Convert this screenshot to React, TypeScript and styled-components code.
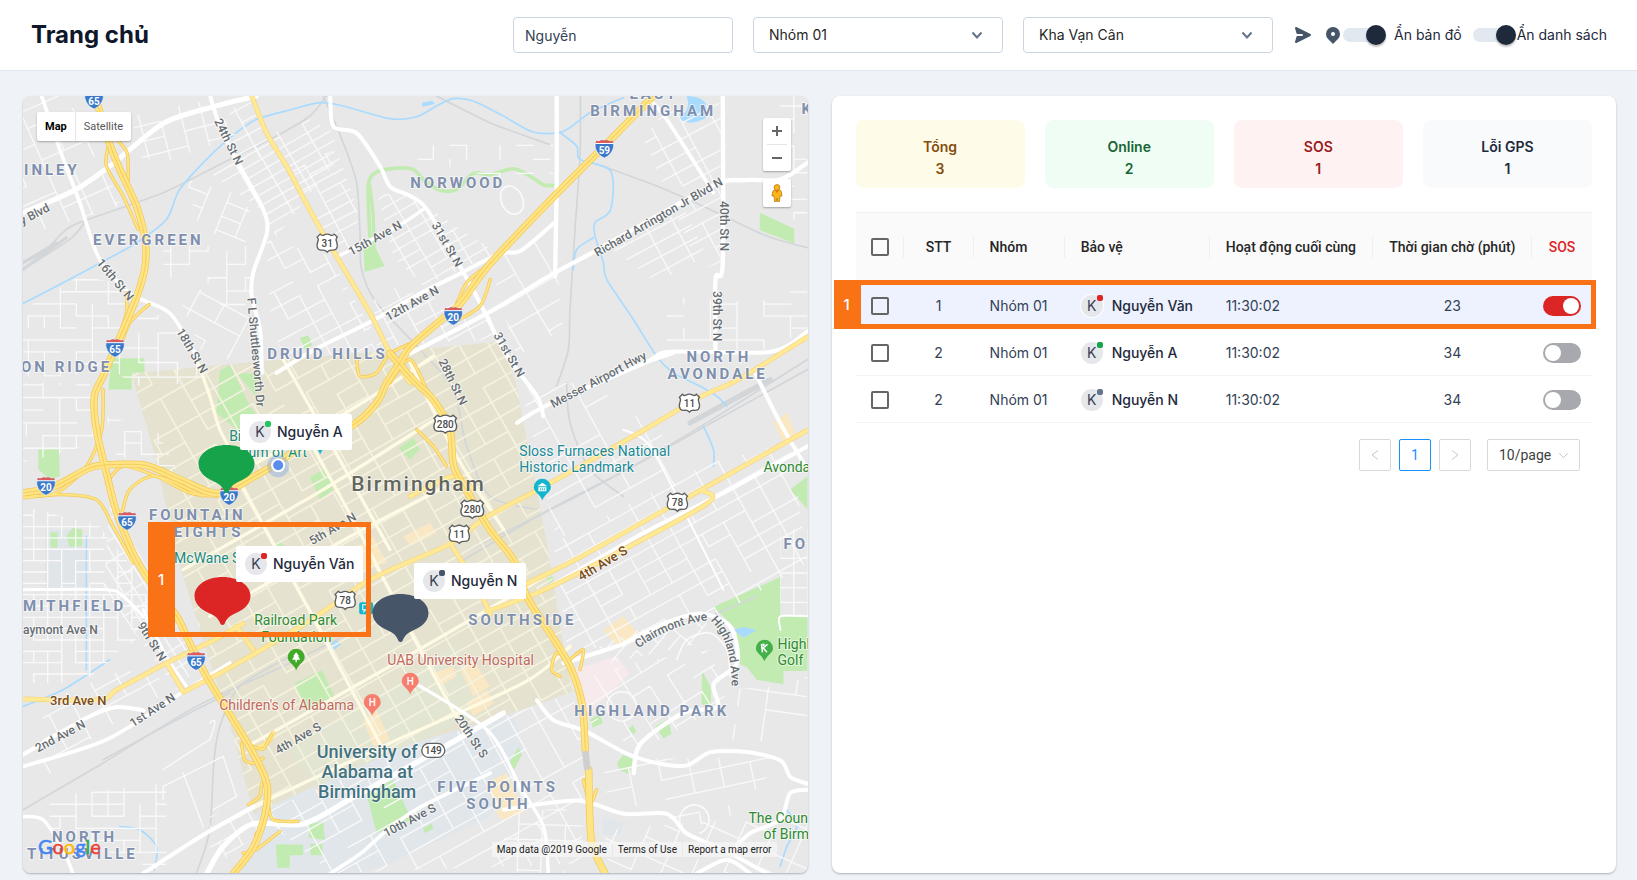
import React, { useState } from "react";
import styled, { createGlobalStyle, css } from "styled-components";

const GlobalStyle = createGlobalStyle`
  *, *::before, *::after { box-sizing: border-box; }
  body { margin: 0; background: #eff3f8; }
  button, input, select { font: inherit; }
`;

const inter = `Inter, "Noto Sans", sans-serif`;
const roboto = `Roboto, "Noto Sans", sans-serif`;

/* ---------- page ---------- */

const Page = styled.div`
  min-height: 100vh;
  display: flex;
  flex-direction: column;
  background: #eff3f8;
  color: #1e293b;
  font-family: ${inter};
  font-size: 14px;
  line-height: 22px;
`;

const Header = styled.header`
  display: flex;
  align-items: center;
  justify-content: space-between;
  padding: 17px 30px 17px 31px;
  background: #fff;
  border-bottom: 1px solid #e2e8f0;
`;

const Title = styled.h1`
  margin: 0;
  font-size: 24px;
  line-height: 34px;
  font-weight: 700;
  color: #0f172a;
`;

const Toolbar = styled.div`
  display: flex;
  align-items: center;
  gap: 20px;
`;

const fieldBox = css`
  height: 36px;
  border: 1px solid #cbd5e1;
  border-radius: 4px;
  background: #fff;
  font-size: 14px;
`;

const SearchInput = styled.input`
  ${fieldBox}
  width: 220px;
  padding: 0 11px;
  color: #334155;
`;

const SelectWrap = styled.div`
  position: relative;
  width: 250px;
  svg {
    position: absolute;
    right: 20px;
    top: 12px;
    pointer-events: none;
  }
`;

const Select = styled.select`
  ${fieldBox}
  width: 100%;
  padding: 0 15px;
  color: #262626;
  appearance: none;
`;

const ViewOptions = styled.div`
  display: flex;
  align-items: center;
`;

const IconButton = styled.button`
  display: flex;
  padding: 0;
  margin-right: 10px;
  border: 0;
  background: none;
  color: #475569;
  &:last-of-type { margin-right: 0; }
`;

const ViewSwitch = styled.label<{ $gap: number }>`
  display: flex;
  align-items: center;
  gap: ${(p) => p.$gap}px;
  font-size: 14px;
  color: #1e293b;
  & + & { margin-left: 11px; }
`;

const ViewSwitchInput = styled.input`
  appearance: none;
  position: relative;
  width: 44px;
  height: 20px;
  margin: 0;
  &::before {
    content: "";
    position: absolute;
    inset: 3px 4px 3px 0;
    border-radius: 7px;
    background: #e2e8f0;
  }
  &::after {
    content: "";
    position: absolute;
    left: 1px;
    top: 0;
    width: 20px;
    height: 20px;
    border-radius: 50%;
    background: #1e293b;
    box-shadow: 0 2px 2px rgba(0, 0, 0, 0.25);
  }
  &:checked::after { left: 23px; }
`;

const Main = styled.main`
  flex: 1;
  display: grid;
  grid-template-columns: minmax(0, 1fr) minmax(0, 1fr);
  gap: 24px;
  padding: 25px 21px 7px 23px;
`;

const Panel = styled.section`
  position: relative;
  border-radius: 8px;
  background: #fff;
  box-shadow: 0 1px 2px rgba(15, 23, 42, 0.3);
`;

/* ---------- map ---------- */

const MapPanel = styled(Panel)`
  overflow: hidden;
  background: #e8e8e8;
`;

const MapCanvas = styled.svg`
  position: absolute;
  inset: 0;
  width: 100%;
  height: 100%;
`;

const MapTypes = styled.div`
  position: absolute;
  left: 14px;
  top: 16px;
  display: flex;
  height: 29px;
  border-radius: 2px;
  background: #fff;
  box-shadow: 0 1px 2px rgba(0, 0, 0, 0.3);
`;

const MapTypeButton = styled.button<{ $active?: boolean }>`
  padding: 0 8px;
  border: 0;
  background: none;
  font-family: ${roboto};
  font-size: 11px;
  font-weight: ${(p) => (p.$active ? 700 : 400)};
  color: ${(p) => (p.$active ? "#000" : "#565656")};
  & + & { border-left: 1px solid #e6e6e6; }
`;

const MapTools = styled.div`
  position: absolute;
  right: 17px;
  top: 22px;
  display: flex;
  flex-direction: column;
  gap: 8px;
`;

const ToolCard = styled.div`
  width: 28px;
  padding: 0 4px;
  border-radius: 2px;
  background: #fff;
  box-shadow: 0 1px 2px rgba(0, 0, 0, 0.3);
`;

const ToolButton = styled.button<{ $tall?: boolean }>`
  display: flex;
  align-items: center;
  justify-content: center;
  width: 100%;
  height: ${(p) => (p.$tall ? 28 : 26)}px;
  padding: 0;
  border: 0;
  background: none;
  & + & { border-top: 1px solid #e6e6e6; height: 27px; }
`;

const Logo = styled.div`
  position: absolute;
  left: 15px;
  bottom: 15px;
  font-family: Lato, sans-serif;
  font-size: 20px;
  line-height: 24px;
  -webkit-text-stroke: 0.5px;
`;

const Letter = styled.span<{ $c: string }>`
  color: ${(p) => p.$c};
`;

const Attribution = styled.div`
  position: absolute;
  right: 31px;
  bottom: 16px;
  display: flex;
  gap: 1px;
  font-family: ${roboto};
  font-size: 10px;
  line-height: 15px;
  color: #222;
`;

const AttributionItem = styled.span`
  padding: 0 5px;
  background: rgba(245, 245, 245, 0.75);
  a { color: inherit; text-decoration: none; }
`;

const At = styled.div<{ $x: number; $y: number }>`
  position: absolute;
  left: ${(p) => p.$x}px;
  top: ${(p) => p.$y}px;
  display: flex;
`;

const Chip = styled.div`
  display: flex;
  align-items: center;
  gap: 6px;
  height: 36px;
  padding: 0 9px;
  border-radius: 2px;
  background: #fff;
  font-weight: 500;
  white-space: nowrap;
`;

const Highlight = styled.div<{ $l: number; $t: number; $w?: number; $r?: number; $h: number }>`
  position: absolute;
  left: ${(p) => p.$l}px;
  top: ${(p) => p.$t}px;
  ${(p) => (p.$w !== undefined ? `width: ${p.$w}px;` : "")}
  ${(p) => (p.$r !== undefined ? `right: ${p.$r}px;` : "")}
  height: ${(p) => p.$h}px;
  display: flex;
  align-items: center;
  padding-left: 10px;
  border: 5px solid #f97316;
  border-left: 0;
  color: #fff;
  font-size: 15px;
  font-weight: 500;
  box-shadow: inset 27px 0 0 #f97316;
  pointer-events: none;
`;

/* ---------- guards ---------- */

const AvatarBox = styled.span`
  position: relative;
  display: inline-flex;
  align-items: center;
  justify-content: center;
  width: 22px;
  height: 22px;
  border-radius: 50%;
  background: #e5e7eb;
  box-shadow: 0 0 0 1px #fff;
  font-size: 14px;
  font-weight: 400;
  color: #374151;
`;

const Dot = styled.i<{ $c: string }>`
  position: absolute;
  right: 0;
  top: 0;
  width: 6px;
  height: 6px;
  border-radius: 2px;
  background: ${(p) => p.$c};
`;

const Avatar = ({ color }: { color: string }) => (
  <AvatarBox>
    K<Dot $c={color} />
  </AvatarBox>
);

/* ---------- list ---------- */

const ListPanel = styled(Panel)`
  padding: 24px;
`;

const Cards = styled.div`
  display: grid;
  grid-template-columns: repeat(4, 1fr);
  gap: 20px;
  margin-bottom: 24px;
`;

const Card = styled.div<{ $bg: string; $fg: string }>`
  padding: 16px 8px 8px;
  border-radius: 8px;
  background: ${(p) => p.$bg};
  color: ${(p) => p.$fg};
  text-align: center;
  font-weight: 600;
`;

const CardLine = styled.div`
  line-height: 22px;
`;

const TableArea = styled.div`
  position: relative;
`;

const Table = styled.table`
  width: 100%;
  table-layout: fixed;
  border-collapse: separate;
  border-spacing: 0;
`;

const Th = styled.th<{ $center?: boolean; $red?: boolean }>`
  position: relative;
  height: 70px;
  padding: 0 ${(p) => (p.$center ? 0 : 16)}px 2px;
  border-top: 1px solid #f0f0f0;
  background: #fafafa;
  text-align: ${(p) => (p.$center ? "center" : "left")};
  font-family: ${roboto};
  font-weight: 500;
  white-space: nowrap;
  color: ${(p) => (p.$red ? "#dc2626" : "#262626")};
  &:not(:last-child)::after {
    content: "";
    position: absolute;
    right: 0;
    top: 23px;
    width: 1px;
    height: 22px;
    background: #efefef;
  }
`;

const Row = styled.tr<{ $active: boolean }>`
  background: ${(p) => (p.$active ? "#eef2ff" : "#fff")};
`;

const Td = styled.td<{ $center?: boolean }>`
  height: 47px;
  padding: 1px ${(p) => (p.$center ? 0 : 16)}px 0;
  border-bottom: 1px solid #f3f4f6;
  text-align: ${(p) => (p.$center ? "center" : "left")};
  white-space: nowrap;
  color: #334155;
`;

const Person = styled.div`
  display: flex;
  align-items: center;
  gap: 9px;
  font-weight: 500;
  color: #1e293b;
`;

const Check = styled.input`
  appearance: none;
  display: block;
  width: 18px;
  height: 18px;
  margin: 0 auto;
  border: 2px solid #666;
  border-radius: 2px;
  &:checked { background: #666; }
`;

const Toggle = styled.input`
  appearance: none;
  position: relative;
  display: block;
  width: 38px;
  height: 20px;
  margin: 0 auto;
  border-radius: 10px;
  background: #a7a9ae;
  &::after {
    content: "";
    position: absolute;
    left: 2px;
    top: 2px;
    width: 16px;
    height: 16px;
    border-radius: 50%;
    background: #fff;
  }
  &:checked { background: #dc2626; }
  &:checked::after { left: 20px; }
`;

const Pagination = styled.nav`
  display: flex;
  justify-content: flex-end;
  gap: 8px;
  padding: 16px 12px 0;
  font-family: ${roboto};
`;

const PageButton = styled.button<{ $current?: boolean }>`
  display: flex;
  align-items: center;
  justify-content: center;
  width: 32px;
  height: 32px;
  padding: 0;
  border: 1px solid ${(p) => (p.$current ? "#1890ff" : "#d9d9d9")};
  border-radius: 2px;
  background: #fff;
  color: ${(p) => (p.$current ? "#1890ff" : "#c8c8c8")};
`;

const PageSize = styled.div`
  position: relative;
  width: 93px;
  margin-left: 8px;
  select {
    width: 100%;
    height: 32px;
    padding: 0 11px;
    border: 1px solid #d9d9d9;
    border-radius: 2px;
    background: #fff;
    color: #404040;
    appearance: none;
  }
  svg {
    position: absolute;
    right: 11px;
    top: 11px;
    pointer-events: none;
  }
`;

/* ---------- map drawing ---------- */

/** Smooth path through a list of "x,y" points. */
function curve(points: string): string {
  const p = points.trim().split(/\s+/).map((s) => s.split(",").map(Number));
  let d = `M${p[0][0]} ${p[0][1]}`;
  for (let i = 0; i < p.length - 1; i++) {
    const a = p[i - 1] || p[i];
    const b = p[i];
    const c = p[i + 1];
    const e = p[i + 2] || c;
    d += `C${b[0] + (c[0] - a[0]) / 7} ${b[1] + (c[1] - a[1]) / 7} ${c[0] - (e[0] - b[0]) / 7} ${c[1] - (e[1] - b[1]) / 7} ${c[0]} ${c[1]}`;
  }
  return d;
}

interface GridProps {
  id: string;
  poly: string;
  angle: number;
  a: number;
  b: number;
  color?: string;
  width?: number;
  keep?: number;
}

/** Street grid clipped to a neighbourhood; some blocks are merged. */
function StreetGrid({ id, poly, angle, a, b, color = "#f9f9f9", width = 4, keep = 0.84 }: GridProps) {
  const pts = poly.split(" ").map((s) => s.split(",").map(Number));
  const xs = pts.map((p) => p[0]);
  const ys = pts.map((p) => p[1]);
  const cx = (Math.min(...xs) + Math.max(...xs)) / 2;
  const cy = (Math.min(...ys) + Math.max(...ys)) / 2;
  const r = Math.hypot(Math.max(...xs) - cx, Math.max(...ys) - cy);
  const na = Math.ceil(r / a);
  const nb = Math.ceil(r / b);
  let seed = Math.round(cx * 7 + cy * 13);
  const rnd = () => {
    seed = (seed * 1103515245 + 12345) % 2147483648;
    return seed / 2147483648;
  };
  let d = "";
  for (let i = -na; i <= na; i++)
    for (let j = -nb; j <= nb; j++) {
      if (rnd() < keep) d += `M${j * b} ${i * a}h${b}`;
      if (rnd() < keep) d += `M${j * b} ${i * a}v${a}`;
    }
  return (
    <g>
      <clipPath id={id}>
        <polygon points={poly} />
      </clipPath>
      <g clipPath={`url(#${id})`}>
        <path d={d} transform={`translate(${cx} ${cy}) rotate(${angle})`} stroke={color} strokeWidth={width} fill="none" />
      </g>
    </g>
  );
}

const urban =
  "326,832 731,794 1001,772 1211,757 1426,737 1476,852 1573,1352 1621,1652 1646,1787 1440,1860 1161,1942 691,2152 631,1922 531,1602 471,1412 391,1062 336,872";

const grids: GridProps[] = [
  { id: "g1", poly: "0,0 180,0 290,330 0,420", angle: -24, a: 52, b: 74, keep: 0.7 },
  { id: "g2", poly: "330,60 560,10 640,120 420,200 340,180", angle: -14, a: 46, b: 62 },
  { id: "g3", poly: "640,20 690,10 760,160 640,220 590,100", angle: -28, a: 40, b: 64 },
  { id: "g4", poly: "560,230 840,60 935,110 935,200 760,420 700,330", angle: -30, a: 30, b: 78, keep: 0.92 },
  { id: "g5", poly: "800,210 940,160 1000,330 1010,480 930,470", angle: -28, a: 32, b: 70 },
  { id: "g6", poly: "490,250 660,300 700,400 640,470 520,370", angle: 22, a: 44, b: 62, keep: 0.7 },
  { id: "g7", poly: "420,450 680,450 690,640 600,640 560,560 420,560", angle: 0, a: 40, b: 56, keep: 0.65 },
  { id: "g8", poly: "0,640 170,540 280,560 320,660 230,830 0,850", angle: 0, a: 36, b: 48, keep: 0.66 },
  { id: "g9", poly: "250,800 360,640 440,670 560,860 330,870", angle: 0, a: 44, b: 58, keep: 0.6 },
  { id: "g10", poly: "450,560 690,620 700,800 540,780", angle: 28, a: 60, b: 84, keep: 0.7 },
  { id: "g11", poly: "730,430 920,480 1080,760 780,790 740,640", angle: -28, a: 46, b: 62, keep: 0.7 },
  { id: "g12", poly: "1060,290 1160,300 1420,470 1200,570 1110,480", angle: -30, a: 32, b: 56, keep: 0.86 },
  { id: "g13", poly: "1170,140 1590,110 1590,270 1440,250 1180,190", angle: 0, a: 42, b: 50, keep: 0.4 },
  { id: "g14", poly: "1050,560 1400,650 1420,730 1060,750", angle: -28, a: 44, b: 70, keep: 0.8 },
  { id: "g15", poly: "1400,500 1590,400 1620,700 1480,780", angle: -30, a: 66, b: 96, keep: 0.9 },
  { id: "g16", poly: "1860,130 1920,50 2095,20 2095,500 2030,520", angle: -28, a: 42, b: 88, keep: 0.85 },
  { id: "g17", poly: "1740,440 1980,330 2050,480 1900,560", angle: -28, a: 40, b: 80, keep: 0.9 },
  { id: "g18", poly: "2270,0 2352,0 2352,380 2270,360", angle: 0, a: 40, b: 66, keep: 0.7 },
  { id: "g19", poly: "1930,600 2200,620 2352,560 2352,700 2230,760 1930,760", angle: 0, a: 36, b: 80, keep: 0.65 },
  { id: "g20", poly: "1490,860 1700,860 2060,1120 1600,1330", angle: -29, a: 92, b: 120, keep: 0.75 },
  { id: "g21", poly: "1590,1340 2060,1100 2300,1040 2352,1400 2100,1550 1700,1660 1630,1640", angle: -29, a: 42, b: 74, keep: 0.82 },
  { id: "g22", poly: "2270,1300 2352,1300 2352,1560 2270,1560", angle: 0, a: 44, b: 42 },
  { id: "g23", poly: "0,860 200,860 220,1040 0,1100", angle: 0, a: 38, b: 50, keep: 0.66 },
  { id: "g24", poly: "250,960 400,1000 460,1120 280,1080", angle: 0, a: 34, b: 50, keep: 0.6 },
  { id: "g25", poly: "0,1230 230,1290 380,1480 400,1580 180,1760 0,1760", angle: 0, a: 34, b: 42, keep: 0.8 },
  { id: "g26", poly: "260,1230 300,1290 540,1700 460,1780 240,1480", angle: 58, a: 34, b: 54, keep: 0.9 },
  { id: "g27", poly: "60,1820 300,1720 480,1760 240,1900 60,2050", angle: -28, a: 58, b: 78, keep: 0.85 },
  { id: "g28", poly: "80,2100 430,2060 430,2331 80,2200", angle: 0, a: 36, b: 48, keep: 0.7 },
  { id: "g29", poly: "560,2160 720,2100 720,2200 560,2320", angle: -28, a: 40, b: 60 },
  { id: "g30", poly: "740,2140 1200,1940 1440,1860 1650,1790 1690,2000 1670,2300 930,2331 760,2200", angle: -29, a: 52, b: 76, keep: 0.8 },
  { id: "g31", poly: "1700,1740 1830,1700 2060,1660 2110,1820 1850,1960 1700,1880", angle: -32, a: 48, b: 62, keep: 0.65 },
  { id: "g32", poly: "1740,1990 2290,1980 2100,2180 1760,2200", angle: -12, a: 58, b: 90, keep: 0.5 },
  { id: "g33", poly: "1740,2200 2352,2150 2352,2331 1760,2331", angle: 24, a: 54, b: 86, keep: 0.55 },
  { id: "g34", poly: "2100,1780 2270,1770 2352,1740 2352,1940 2120,1930", angle: 8, a: 56, b: 84, keep: 0.6 },
  { id: "g35", poly: "1450,2150 1680,2130 1680,2331 1430,2331", angle: 2, a: 46, b: 70, keep: 0.7 },
  { id: "g36", poly: "2030,1640 1760,1700 1700,1660 1900,1580 2110,1580", angle: -50, a: 36, b: 60, keep: 0.6 },
];

const rails = [
  "0,500 60,470 130,400 190,372 420,290 600,200 760,120 860,60 910,0",
  "900,0 960,140 1000,260 1010,400 1015,520 1060,620 1190,760 1290,880 1330,1050 1400,1200 1540,1240",
  "1671,0 1670,180 1655,400 1640,640 1635,760 1600,870",
  "1240,0 1400,80 1580,146",
  "1732,208 1900,270 2060,340 2230,420 2352,455",
  "1240,1440 1560,1250 1830,1110 2100,960 2352,820",
  "1300,1380 1700,1180 2000,1010 2352,790",
  "0,2140 240,2000 520,1830 780,1710 980,1610",
  "240,1990 480,1860 620,1790",
  "520,2331 560,2200 572,2000 590,1890 650,1770 800,1680",
  "1630,860 1640,980 1700,1120 1800,1200",
  "0,520 140,430 190,372",
  "2060,1560 2200,1500",
];

const waters = [
  "0,622 120,560 270,480 340,440 430,370 470,280 560,180 640,110 700,70 800,42 890,20 960,30 1100,68 1180,62 1240,30 1290,8 1350,15 1440,60 1530,108 1620,106 1700,50 1800,5",
  "1610,110 1660,150 1670,190 1762,225 1762,340 1715,380 1715,420 1740,500 1750,550 1830,670 1900,780 1950,830 2030,870 2080,900 2110,930",
  "1710,425 1660,460 1650,520",
  "2040,990 2070,1060 2070,1110",
  "260,1690 120,1780 0,1830",
  "190,1320 190,1500 190,1720",
  "290,2190 350,2200 400,2250 395,2320",
  "2290,2140 2320,2190 2290,2250 2270,2310",
];

const arterials: [string, number][] = [
  ["0,350 156,282 271,202 421,82 571,32 700,0", 15],
  ["56,0 111,162 171,322 226,482 321,592 441,652 521,782", 11],
  ["561,0 591,92 651,212 721,342 731,412 690,530 686,602 711,700 716,830", 12],
  ["921,0 931,92 1001,112 1071,212 1101,272 1161,300 1211,340 1311,512 1371,622 1451,780 1541,900 1560,960", 12],
  ["941,482 1121,392 1200,340", 10],
  ["760,830 871,762 1051,672 1191,592 1311,532 1431,472 1491,465 1591,382", 12],
  ["1600,0 1600,260 1595,540", 13],
  ["1161,772 1391,652 1591,532 1721,462 2061,272 2161,252 2271,250 2352,200", 13],
  ["2098,0 2098,500 2076,550 2076,775", 13],
  ["1870,0 1930,70 2070,290", 11],
  ["1481,980 1571,927 1861,802 1941,767 2241,767 2352,705", 12],
  ["1861,800 1950,770", 12],
  ["0,1975 190,1865 281,1832 361,1842", 12],
  ["0,2010 250,1930 471,1792 620,1700", 11],
  ["360,2331 541,2215 691,2130", 12],
  ["551,2331 600,2250 690,2182 841,2182 991,2102 1191,1992 1440,1850", 16],
  ["921,2331 1011,2272 1091,2202 1191,2132 1401,2030", 11],
  ["1541,1812 1591,1872 1681,1902 1811,1972 1911,2002 1991,2007 2061,1967 2171,1967 2271,1992 2301,2042 2352,2062", 12],
  ["1441,2140 1661,2112 1801,2152 1931,2152 1991,2212 2100,2260 2230,2331", 12],
  ["1621,1700 1801,1642 1921,1582 2031,1552 2121,1592 2141,1700 2071,1762 2081,1832 1980,1850 1851,1942 1831,2030", 13],
  ["1161,1752 1391,1900 1491,2072 1561,2192 1575,2331", 10],
  ["2120,2270 2180,2210 2270,2170 2300,2090 2352,2080", 12],
  ["0,1480 250,1480 300,1500 360,1560", 9],
  ["1391,1540 1561,1480 1860,1310 2100,1190 2352,1050", 12],
  ["2190,820 2270,980 2352,1120", 12],
  ["360,1540 430,1680 490,1770", 9],
  ["0,2160 60,2170 120,2260 150,2331", 10],
  ["2020,2331 2110,2290 2180,2331", 12],
  ["1800,1000 1880,1050 2000,1280 2100,1480", 6],
  ["2271,1600 2271,1560 2352,1560", 6],
];

const cream: string[] = [
  "520,790 560,900 590,1000 640,1090",
  "480,1420 900,1180 1250,960",
  "620,1100 760,1360 900,1620 1080,1960",
  "840,1000 1000,1290 1180,1640 1320,1900",
  "700,1100 1000,930 1230,780",
  "560,1560 1000,1310 1250,1180",
  "690,1940 1100,1710 1600,1420",
  "691,2130 1100,1940 1500,1760 1640,1650",
  "1161,800 1300,1080 1441,1300",
  "780,790 1000,1180 1100,1360",
];

const lightYellow: string[] = [
  "686,0 731,112 791,212 871,362 941,482 1041,652 1101,772 1161,860",
  "0,1808 230,1810 281,1780 431,1700 571,1632 660,1582",
  "481,1787 600,1725 741,1645 880,1560 1031,1455 1161,1395 1281,1342 1391,1262 1541,1182 1721,1082 1861,1002 2031,902 2141,852 2352,722",
  "1511,1462 1671,1382 1931,1237 2031,1182 2352,1002",
  "1391,1545 1541,1490 1700,1412 2051,1222 2031,1182",
  "1281,1342 1350,1450 1401,1552",
  "430,1700 481,1787",
  "640,1590 690,1660",
  "1161,1200 1290,1140 1350,1180",
  "690,1958 731,1940 750,1910",
];

const highways: string[] = [
  "216,0 256,132 291,222 341,332 366,432 366,512 341,602 291,722 240,840 214,900 220,1000 250,1130 275,1230 300,1300 340,1390 390,1470 461,1560 500,1640 551,1742 631,1872 691,1972 731,2062 726,2152 691,2252 631,2331",
  "0,1190 91,1172 200,1115 271,1105 371,1108 471,1150 560,1188 611,1187 691,1142 761,1102 851,1042 991,985 1060,920 1090,860 1130,800 1161,752 1241,682 1311,622 1401,502 1601,292 1741,152 1890,0",
  "1101,772 1171,852 1231,912 1280,1000 1292,1112 1341,1202 1401,1302 1471,1392 1511,1502 1581,1612 1641,1712 1676,1822 1686,1962",
  "1696,2020 1704,2232 1745,2331",
];

const ramps: string[] = [
  "240,880 236,1000 190,1110 100,1190 0,1200",
  "250,1160 300,1110 400,1140 500,1190 580,1200",
  "540,1200 400,1140 320,1180 295,1260",
  "0,1205 110,1195 220,1210 270,1290 330,1400",
  "256,150 250,210 300,300 345,400",
  "271,120 312,170 315,260",
  "378,625 320,680 290,760",
  "310,590 310,650 285,730",
  "1001,790 1010,840 1060,830 1101,772 1190,730",
  "1101,860 1160,790 1210,880",
  "1180,1000 1230,1050 1270,1110",
  "1401,502 1330,560 1290,650",
  "1401,550 1370,630 1290,680",
  "655,1940 665,1990 695,2000 720,1985",
  "690,1950 720,1958 745,1915",
  "715,2060 710,2100 675,2125",
  "735,2120 750,2170 825,2175",
  "700,2210 690,2260 660,2270",
  "770,2205 700,2260",
  "1640,1700 1600,1670 1585,1720 1610,1740",
  "1640,1690 1680,1660 1670,1720",
  "1680,2050 1700,2120 1720,2080",
];

const parks = [
  "265,786 364,786 364,830 326,830 326,880 256,880",
  "590,824 620,806 680,930 730,990 640,1000 580,950",
  "641,832 700,832 700,900",
  "830,724 856,718 868,748 844,760",
  "1021,454 1052,444 1084,510 1024,528",
  "2209,350 2312,398 2312,442 2209,402",
  "2070,1532 2270,1442 2270,1560 2352,1560 2352,1724 2280,1724 2280,1764 2200,1750 2170,1712 2140,1700 2140,1600",
  "2300,1180 2352,1140 2352,1240",
  "860,1142 910,1114 930,1180 890,1210",
  "1126,1055 1171,1024 1190,1060 1161,1090",
  "750,1345 770,1336 785,1350 752,1370",
  "46,1060 108,1060 110,1140 80,1150 46,1120",
  "82,1308 104,1308 104,1354 82,1354",
  "130,1320 150,1294 178,1300 176,1350 140,1352",
  "815,1760 896,1722 934,1800 850,1850",
  "1030,2092 1110,2050 1165,2170 1060,2210",
  "758,2244 840,2244 840,2276 800,2276 800,2314 762,2314",
  "860,2182 900,2176 905,2230 856,2224",
  "862,2242 898,2242 898,2276 862,2276",
  "1455,2004 1486,1952 1496,1974 1472,2020",
  "2036,1724 2062,1770 2064,1850 2034,1820",
  "1896,1890 1934,1866 1944,1912 1920,1926",
  "1780,2000 1800,1976 1830,1990 1816,2032 1790,2022",
  "1814,1900 1828,1886 1838,1904 1832,1914",
  "1700,1870 1730,1850 1738,1880 1708,1894",
  "1570,1448 1588,1440 1594,1452 1574,1462",
  "1200,2196 1226,2180 1230,2196 1204,2210",
];

const blocks: [string, string][] = [
  ["691,2152 1161,1942 1470,1850 1500,1960 1400,2160 1100,2300 1000,2331 620,2331 720,2200", "#e1e6eb"],
  ["66,1300 176,1300 186,1350 186,1480 66,1480", "#e0e5ea"],
  ["1650,1720 1780,1680 1818,1730 1740,1810 1690,1850 1670,1800", "#f7eaec"],
  ["1740,2160 1800,2180 1790,2216 1740,2216", "#e1e6eb"],
];

const warm = [
  "1020,1870 1060,1842 1100,1930 1050,1950",
  "1310,1720 1350,1690 1400,1770 1350,1800",
  "1330,1820 1390,1780 1410,1820 1350,1860",
  "1230,1730 1290,1710 1300,1740 1250,1770",
  "1000,1350 1050,1320 1090,1400 1010,1420",
  "1140,1320 1220,1280 1240,1310 1161,1350",
  "1390,2060 1450,2030 1500,2150 1430,2170",
  "1740,1600 1800,1560 1850,1620 1780,1650",
  "2250,980 2290,950 2320,1020 2280,1040",
];

const areaLabels: [number, number, string][] = [
  [1, 79, "INLEY"],
  [70, 149, "EVERGREEN"],
  [-2, 276, "ON RIDGE"],
  [244, 263, "DRUID HILLS"],
  [387, 92, "NORWOOD"],
  [606, 3, "EAST"],
  [567, 20, "BIRMINGHAM"],
  [778, 18, "K"],
  [663, 266, "NORTH"],
  [644, 283, "AVONDALE"],
  [126, 424, "FOUNTAIN"],
  [137, 441, "HEIGHTS"],
  [0, 515, "MITHFIELD"],
  [445, 529, "SOUTHSIDE"],
  [760, 453, "FO"],
  [551, 620, "HIGHLAND PARK"],
  [414, 696, "FIVE POINTS"],
  [443, 713, "SOUTH"],
  [29, 746, "NORTH"],
  [4, 763, "TITUSVILLE"],
];

const streetLabels: [number, number, number, string][] = [
  [191, 25, 64, "24th St N"],
  [408, 129, 60, "31st St N"],
  [470, 239, 60, "31st St N"],
  [415, 265, 64, "28th St N"],
  [73, 167, 50, "16th St N"],
  [153, 235, 60, "18th St N"],
  [224, 202, 85, "F L Shuttlesworth Dr"],
  [328, 160, -29, "15th Ave N"],
  [365, 225, -29, "12th Ave N"],
  [-1, 129, -27, "y Blvd"],
  [574, 161, -30, "Richard Arrington Jr Blvd N"],
  [697, 105, 90, "40th St N"],
  [690, 195, 90, "39th St N"],
  [530, 312, -28, "Messer Airport Hwy"],
  [289, 449, -30, "5th Ave N"],
  [0, 538, 0, "aymont Ave N"],
  [114, 529, 58, "9th St N"],
  [110, 631, -33, "1st Ave N"],
  [15, 656, -28, "2nd Ave N"],
  [255, 658, -30, "4th Ave S"],
  [431, 622, 56, "20th St S"],
  [363, 741, -28, "10th Ave S"],
];

const poiLabels: [number, number, string, string][] = [
  [496, 360, "Sloss Furnaces National", "#1a8a97"],
  [496, 376, "Historic Landmark", "#1a8a97"],
  [206, 345, "Birmingham", "#1a8a7d"],
  [151, 467, "McWane Science", "#1a8a7d"],
  [231, 529, "Railroad Park", "#2e8b2e"],
  [238, 546, "Foundation", "#2e8b2e"],
  [364, 569, "UAB University Hospital", "#c2695a"],
  [196, 614, "Children's of Alabama", "#c2695a"],
  [740, 376, "Avondale", "#2e8b2e"],
  [754, 553, "Highland", "#2e8b2e"],
  [754, 569, "Golf", "#2e8b2e"],
  [725, 727, "The Country", "#2e8b2e"],
  [740, 743, "of Birmingham", "#2e8b2e"],
];

const interstates: [number, number, string][] = [
  [71, 4, "65"], [92, 252, "65"], [581, 53, "59"], [430, 220, "20"],
  [23, 390, "20"], [104, 425, "65"], [206, 400, "20"], [173, 565, "65"],
];

const usRoutes: [number, number, string][] = [
  [304, 147, "31"], [422, 328, "280"], [449, 413, "280"], [436, 438, "11"],
  [666, 307, "11"], [654, 406, "78"], [322, 504, "78"],
];

const Halo = styled.g`
  font-family: ${roboto};
  paint-order: stroke;
  stroke: rgba(255, 255, 255, 0.6);
  stroke-width: 2px;
  stroke-linejoin: round;
`;

const PinShape = ({ x, y, fill, children }: { x: number; y: number; fill: string; children?: React.ReactNode }) => (
  <g transform={`translate(${x} ${y})`}>
    <path d="M0-8.500A8.500 8.500 0 0 1 8.500 0C8.500 5 2.500 6.500 0 13C-2.500 6.500-8.500 5-8.500 0A8.500 8.500 0 0 1 0-8.500Z" fill={fill} />
    {children}
  </g>
);

const CityMap = () => (
  <MapCanvas viewBox="0 0 784 777" preserveAspectRatio="xMinYMin slice" role="img" aria-label="Birmingham">
    <rect width="784" height="777" fill="#e8e8e8" />
    <g transform="scale(0.333333)" fill="none" strokeLinecap="round" strokeLinejoin="round">
      {blocks.map(([p, c]) => <polygon key={p} points={p} fill={c} />)}
      <polygon points={urban} fill="#e5e2d0" />
      <polygon points="800,1960 1300,1640 1380,1850 1161,1942 880,2070" fill="#e1e5d2" />
      {warm.map((p) => <polygon key={p} points={p} fill="#fae8c4" />)}
      {parks.map((p) => <polygon key={p} points={p} fill="#c2ebb2" />)}
      <path d={curve("1040,420 1035,270 1060,228 1120,216 1170,220 1200,250 1250,282 1300,280 1350,232 1400,236 1470,218 1520,240 1560,266 1590,268")} stroke="#c2ebb2" strokeWidth="11" />
      <path d={curve("1040,270 1050,360 1052,450")} stroke="#c2ebb2" strokeWidth="10" />
      <path d="M1990 0Q2040 0 2050 30Q2060 60 2040 70Q2000 90 1970 70Q1960 50 1985 50Q2000 30 1990 0Z" fill="#a9dbff" />
      <path d="M2130 1600l30-8 40 10-40 22z M1197 20l30-6 8 10-38 8z M910 1650l30-20 14 14-34 26z" fill="#a9dbff" />
      {rails.map((p) => <path key={p} d={curve(p)} stroke="#d3d6d9" strokeWidth="5" />)}
      <path d="M2000 980L2240 850" stroke="#d3d6d9" strokeWidth="16" />
      <path d="M0 520L130 425M0 500L100 440" stroke="#d3d6d9" strokeWidth="9" />
      {waters.map((p) => <path key={p} d={curve(p)} stroke="#a9dbff" strokeWidth="5" />)}
      {grids.map((g) => <StreetGrid key={g.id} {...g} />)}
      <StreetGrid id="urban" poly={urban} angle={-29.6} a={50} b={78} color="#f5f2df" width={5} keep={0.85} />
      <path d="M420 2110v-40L600 1980l40 120-70 40M480 2030l60 160M560 1880q30-30 0 50l-80 50-60 40" stroke="#fafafa" strokeWidth="4" />
      <circle cx="1795" cy="1830" r="44" stroke="#fafafa" strokeWidth="4" />
      <ellipse cx="1466" cy="312" rx="32" ry="44" transform="rotate(-25 1466 312)" stroke="#fafafa" strokeWidth="5" />
      <path d="M1970 2180a44 44 0 1 1 60 30" stroke="#fafafa" strokeWidth="5" />
      <path d={curve("1960,1690 1990,1630 2060,1610 2110,1660 2120,1740")} stroke="#fafafa" strokeWidth="5" />
      {cream.map((p) => <path key={p} d={curve(p)} stroke="#fffae3" strokeWidth="10" />)}
      {arterials.map(([p, w]) => <path key={p} d={curve(p)} stroke="#fff" strokeWidth={w} />)}
      {lightYellow.map((p) => <path key={p} d={curve(p)} stroke="#f5d483" strokeWidth="15" />)}
      {lightYellow.map((p) => <path key={p} d={curve(p)} stroke="#ffe994" strokeWidth="11" />)}
      {ramps.map((p) => <path key={p} d={curve(p)} stroke="#f2c654" strokeWidth="10" />)}
      {ramps.map((p) => <path key={p} d={curve(p)} stroke="#ffe483" strokeWidth="6" />)}
      {highways.map((p) => <path key={p} d={curve(p)} stroke="#f2c654" strokeWidth="22" />)}
      {highways.map((p) => <path key={p} d={curve(p)} stroke="#ffe483" strokeWidth="18" />)}
      {highways.slice(0, 3).map((p) => <path key={p} d={curve(p)} stroke="#f4cd5e" strokeWidth="3" />)}
      <path d="M1686 1964L1692 2020" stroke="#cfcfcf" strokeWidth="20" strokeLinecap="butt" />
    </g>

    <Halo fontSize="12" fill="#666d72" fontWeight="500">
      {streetLabels.map(([x, y, r, t], i) => (
        <text key={i} transform={`translate(${x} ${y}) rotate(${r})`}>{t}</text>
      ))}
      <path id="clairmont" d="M615 552Q646 529 684 524" fill="none" stroke="none" />
      <path id="highland" d="M687 524Q706 542 708 580L709 610" fill="none" stroke="none" />
      <text><textPath href="#clairmont">Clairmont Ave</textPath></text>
      <text><textPath href="#highland">Highland Ave</textPath></text>
    </Halo>
    <Halo fontSize="13" fill="#7a4b1b" fontWeight="500">
      <text transform="translate(558 485) rotate(-31)">4th Ave S</text>
      <text x="27" y="609">3rd Ave N</text>
    </Halo>
    <Halo fontSize="15" fill="#7f8fae" fontWeight="700" letterSpacing="3">
      {areaLabels.map(([x, y, t]) => <text key={`${t}${y}`} x={x} y={y}>{t}</text>)}
    </Halo>
    <Halo fontSize="14">
      {poiLabels.map(([x, y, t, c]) => <text key={t} x={x} y={y} fill={c}>{t}</text>)}
      <text x="284" y="361" textAnchor="end" fill="#1a8a7d">Museum of Art</text>
    </Halo>
    <Halo fontSize="18" fill="#437280" fontWeight="500" textAnchor="middle">
      <text x="344" y="662">University of</text>
      <text x="344" y="682">Alabama at</text>
      <text x="344" y="702">Birmingham</text>
    </Halo>
    <Halo fontSize="21" fill="#62665f" fontWeight="500" letterSpacing="2">
      <text x="328" y="395">Birmingham</text>
    </Halo>

    <g fontFamily={roboto} textAnchor="middle">
      {interstates.map(([x, y, t], i) => (
        <g key={i} transform={`translate(${x} ${y})`}>
          <path d="M-8-8.500Q-6-7-4-8.500Q-2-9.500 0-8.500Q2-9.500 4-8.500Q6-7 8-8.500Q10-4 9-1Q7 6 0 9Q-7 6-9-1Q-10-4-8-8.500Z" fill="#3a78c9" stroke="#fff" strokeWidth="0.6" />
          <path d="M-8-8.500Q-6-7-4-8.500Q-2-9.500 0-8.500Q2-9.500 4-8.500Q6-7 8-8.500L8.800-6H-8.800Z" fill="#dd5b5b" />
          <path d="M-9-5.500H9" stroke="#fff" />
          <text y="4.500" fontSize="10" fontWeight="700" fill="#fff">{t}</text>
        </g>
      ))}
      {usRoutes.map(([x, y, t], i) => (
        <g key={i} transform={`translate(${x} ${y}) scale(${t.length > 2 ? 1.12 : 1} 1)`}>
          <path d="M-7-9Q-5-7-3.500-8Q-1.500-9 0-9Q1.500-9 3.500-8Q5-7 7-9L10-6Q8-4 9.500-1Q11 3 9 6Q7 7.500 4 7Q1.500 7 0 9Q-1.500 7-4 7Q-7 7.500-9 6Q-11 3-9.500-1Q-8-4-10-6Z" fill="#fff" stroke="#5f6060" strokeWidth="1.300" />
        </g>
      ))}
      {usRoutes.map(([x, y, t], i) => (
        <text key={i} x={x} y={y + 4} fontSize="10" fontWeight="500" fill="#4a4a4a">{t}</text>
      ))}
      <rect x="398.500" y="647" width="23" height="14" rx="7" fill="#fff" stroke="#5f6060" strokeWidth="1.300" />
      <text x="410" y="658" fontSize="10" fontWeight="500" fill="#4a4a4a">149</text>

      <PinShape x={519} y={391} fill="#12b5cb">
        <path d="M-5-1L0-4.500 5-1ZM-4 0h8v4h-8Z" fill="#fff" />
        <path d="M-2 3V1M0 3V1M2 3V1" stroke="#12b5cb" />
      </PinShape>
      <PinShape x={273} y={561} fill="#43a929">
        <path d="M0-5L3-1H2L4 2.500H.7V5H-.7V2.500H-4L-2-1H-3Z" fill="#fff" />
      </PinShape>
      <PinShape x={387} y={585} fill="#f77e6e"><text y="3.500" fontSize="10" fontWeight="500" fill="#fff">H</text></PinShape>
      <PinShape x={349} y={606} fill="#f77e6e"><text y="3.500" fontSize="10" fontWeight="500" fill="#fff">H</text></PinShape>
      <PinShape x={741} y={552} fill="#43b049">
        <path d="M-3-4.500L-2 4M-2 0L3-4M-1 0L2.500 4" stroke="#fff" strokeWidth="1.500" fill="none" />
        <circle cx="-1" cy="-3.500" r="1.300" fill="#fff" />
      </PinShape>
    </g>
    <path d="M294 352h6l-3 6z" fill="#12b5cb" />
    <rect x="336" y="506" width="14" height="12" rx="2" fill="#12b5cb" />
    <path d="M339.500 508.500h5v5h-5zM340 516l1.500-2M344 516l-1.500-2" fill="none" stroke="#fff" />
    <circle cx="255" cy="370" r="11" fill="#5b8def" opacity="0.3" />
    <circle cx="255" cy="369" r="7" fill="#fff" />
    <circle cx="255" cy="369" r="5" fill="#5b8def" />
  </MapCanvas>
);

const GuardPin = ({ color }: { color: string }) => (
  <svg width="57" height="48" viewBox="0 0 57 48" aria-hidden="true">
    <path d="M28.500 0C44.500 0 56.500 8.500 56.500 19C56.500 29 47 34 39 37.500C34 40 32 43 30.500 47Q28.500 49 26.500 47C25 43 23 40 18 37.500C10 34 .5 29 .5 19C.5 8.500 12.500 0 28.500 0Z" fill={color} />
  </svg>
);

const Chevron = ({ size, color, width }: { size: number; color: string; width: number }) => (
  <svg width={size} height={size} viewBox="0 0 12 12" fill="none" stroke={color} strokeWidth={width} aria-hidden="true">
    <path d="M1.500 3.500L6 8.500L10.500 3.500" />
  </svg>
);

const markers = [
  { name: "Nguyễn A", color: "#16a34a", dot: "#22c55e", pin: [175, 349], chip: [217, 318] },
  { name: "Nguyễn Văn", color: "#dc2626", dot: "#dc2626", pin: [171, 481], chip: [213, 450] },
  { name: "Nguyễn N", color: "#475569", dot: "#475569", pin: [349, 498], chip: [391, 467] },
];

const stats = [
  { label: "Tổng", value: 3, bg: "#fefce8", fg: "#854d0e" },
  { label: "Online", value: 2, bg: "#f0fdf4", fg: "#166534" },
  { label: "SOS", value: 1, bg: "#fef2f2", fg: "#991b1b" },
  { label: "Lỗi GPS", value: 1, bg: "#f8fafc", fg: "#1e293b" },
];

const guards = [
  { stt: 1, group: "Nhóm 01", name: "Nguyễn Văn", dot: "#dc2626", last: "11:30:02", wait: 23, sos: true },
  { stt: 2, group: "Nhóm 01", name: "Nguyễn A", dot: "#16a34a", last: "11:30:02", wait: 34, sos: false },
  { stt: 2, group: "Nhóm 01", name: "Nguyễn N", dot: "#64748b", last: "11:30:02", wait: 34, sos: false },
];

const columnWidths = [48, 70, 91, 145, 163, 159, 60];

export default function App() {
  const [query, setQuery] = useState("Nguyễn");
  return (
    <Page>
      <GlobalStyle />
      <Header>
        <Title>Trang chủ</Title>
        <Toolbar>
          <SearchInput aria-label="Tên bảo vệ" value={query} onChange={(e) => setQuery(e.target.value)} />
          <SelectWrap>
            <Select aria-label="Nhóm"><option>Nhóm 01</option></Select>
            <Chevron size={12} color="#64748b" width={2} />
          </SelectWrap>
          <SelectWrap>
            <Select aria-label="Khu vực"><option>Kha Vạn Cân</option></Select>
            <Chevron size={12} color="#64748b" width={2} />
          </SelectWrap>
          <ViewOptions>
            <IconButton type="button" aria-label="Gửi">
              <svg width="20" height="20" viewBox="0 0 20 20" fill="currentColor">
                <path transform="rotate(90 10 10)" d="M10.894 2.553a1 1 0 00-1.788 0l-7 14a1 1 0 001.169 1.409l5-1.429A1 1 0 009 15.571V11a1 1 0 112 0v4.571a1 1 0 00.725.962l5 1.428a1 1 0 001.170-1.408l-7-14z" />
              </svg>
            </IconButton>
            <IconButton type="button" aria-label="Vị trí">
              <svg width="20" height="20" viewBox="0 0 20 20" fill="currentColor">
                <path fillRule="evenodd" d="M5.050 4.050a7 7 0 119.900 9.900L10 18.900l-4.950-4.950a7 7 0 010-9.900zM10 11a2 2 0 100-4 2 2 0 000 4z" />
              </svg>
            </IconButton>
            <ViewSwitch $gap={7}>
              <ViewSwitchInput type="checkbox" defaultChecked />
              Ẩn bản đồ
            </ViewSwitch>
            <ViewSwitch $gap={0}>
              <ViewSwitchInput type="checkbox" defaultChecked />
              Ẩn danh sách
            </ViewSwitch>
          </ViewOptions>
        </Toolbar>
      </Header>

      <Main>
        <MapPanel>
          <CityMap />
          <MapTypes>
            <MapTypeButton type="button" $active>Map</MapTypeButton>
            <MapTypeButton type="button">Satellite</MapTypeButton>
          </MapTypes>
          <MapTools>
            <ToolCard>
              <ToolButton type="button" aria-label="Zoom in">
                <svg width="10" height="10" viewBox="0 0 10 10" stroke="#666" strokeWidth="2"><path d="M0 5H10M5 0V10" /></svg>
              </ToolButton>
              <ToolButton type="button" aria-label="Zoom out">
                <svg width="10" height="10" viewBox="0 0 10 10" stroke="#666" strokeWidth="2"><path d="M0 5H10" /></svg>
              </ToolButton>
            </ToolCard>
            <ToolCard>
              <ToolButton type="button" aria-label="Street View" $tall>
                <svg width="12" height="18" viewBox="0 0 12 18">
                  <path d="M3.500 6H8.500Q10 6 10.300 8L11 12H9L8.500 17.500H6.500L6 14 5.500 17.500H3.500L3 12H1L1.700 8Q2 6 3.500 6Z" fill="#fbb41a" stroke="#b97a10" strokeWidth="0.8" />
                  <path d="M4 6.500H8L6 9Z" fill="#e8710a" />
                  <circle cx="6" cy="3.500" r="2.900" fill="#fbb41a" stroke="#b97a10" strokeWidth="0.8" />
                </svg>
              </ToolButton>
            </ToolCard>
          </MapTools>
          <Logo>
            <Letter $c="#4285f4">G</Letter>
            <Letter $c="#ea4335">o</Letter>
            <Letter $c="#fbbc05">o</Letter>
            <Letter $c="#4285f4">g</Letter>
            <Letter $c="#34a853">l</Letter>
            <Letter $c="#ea4335">e</Letter>
          </Logo>
          <Attribution>
            <AttributionItem>Map data @2019 Google</AttributionItem>
            <AttributionItem><a href="#terms">Terms of Use</a></AttributionItem>
            <AttributionItem><a href="#report">Report a map error</a></AttributionItem>
          </Attribution>
          <Highlight $l={125} $t={426} $w={223} $h={115}>1</Highlight>
          {markers.map((m) => (
            <React.Fragment key={m.name}>
              <At $x={m.pin[0]} $y={m.pin[1]}><GuardPin color={m.color} /></At>
              <At $x={m.chip[0]} $y={m.chip[1]}>
                <Chip><Avatar color={m.dot} />{m.name}</Chip>
              </At>
            </React.Fragment>
          ))}
        </MapPanel>

        <ListPanel>
          <Cards>
            {stats.map((s) => (
              <Card key={s.label} $bg={s.bg} $fg={s.fg}>
                <CardLine>{s.label}</CardLine>
                <CardLine>{s.value}</CardLine>
              </Card>
            ))}
          </Cards>
          <TableArea>
            <Table>
              <colgroup>
                {columnWidths.map((w, i) => <col key={i} width={w} />)}
              </colgroup>
              <thead>
                <tr>
                  <Th $center><Check type="checkbox" aria-label="Chọn tất cả" /></Th>
                  <Th $center>STT</Th>
                  <Th>Nhóm</Th>
                  <Th>Bảo vệ</Th>
                  <Th>Hoạt động cuối cùng</Th>
                  <Th $center>Thời gian chờ (phút)</Th>
                  <Th $center $red>SOS</Th>
                </tr>
              </thead>
              <tbody>
                {guards.map((g) => (
                  <Row key={g.name} $active={g.sos}>
                    <Td $center><Check type="checkbox" aria-label={`Chọn ${g.name}`} /></Td>
                    <Td $center>{g.stt}</Td>
                    <Td>{g.group}</Td>
                    <Td><Person><Avatar color={g.dot} />{g.name}</Person></Td>
                    <Td>{g.last}</Td>
                    <Td $center>{g.wait}</Td>
                    <Td $center><Toggle type="checkbox" aria-label={`SOS ${g.name}`} defaultChecked={g.sos} /></Td>
                  </Row>
                ))}
              </tbody>
            </Table>
            <Highlight $l={-22} $t={68} $r={-4} $h={49}>1</Highlight>
          </TableArea>
          <Pagination aria-label="Phân trang">
            <PageButton type="button" aria-label="Trang trước">
              <svg width="12" height="12" viewBox="0 0 12 12" fill="none" stroke="currentColor"><path d="M9 1.500L3 6L9 10.500" /></svg>
            </PageButton>
            <PageButton type="button" $current>1</PageButton>
            <PageButton type="button" aria-label="Trang sau">
              <svg width="12" height="12" viewBox="0 0 12 12" fill="none" stroke="currentColor"><path d="M3 1.500L9 6L3 10.500" /></svg>
            </PageButton>
            <PageSize>
              <select aria-label="Số dòng mỗi trang"><option>10/page</option></select>
              <Chevron size={11} color="#bfbfbf" width={1} />
            </PageSize>
          </Pagination>
        </ListPanel>
      </Main>
    </Page>
  );
}
